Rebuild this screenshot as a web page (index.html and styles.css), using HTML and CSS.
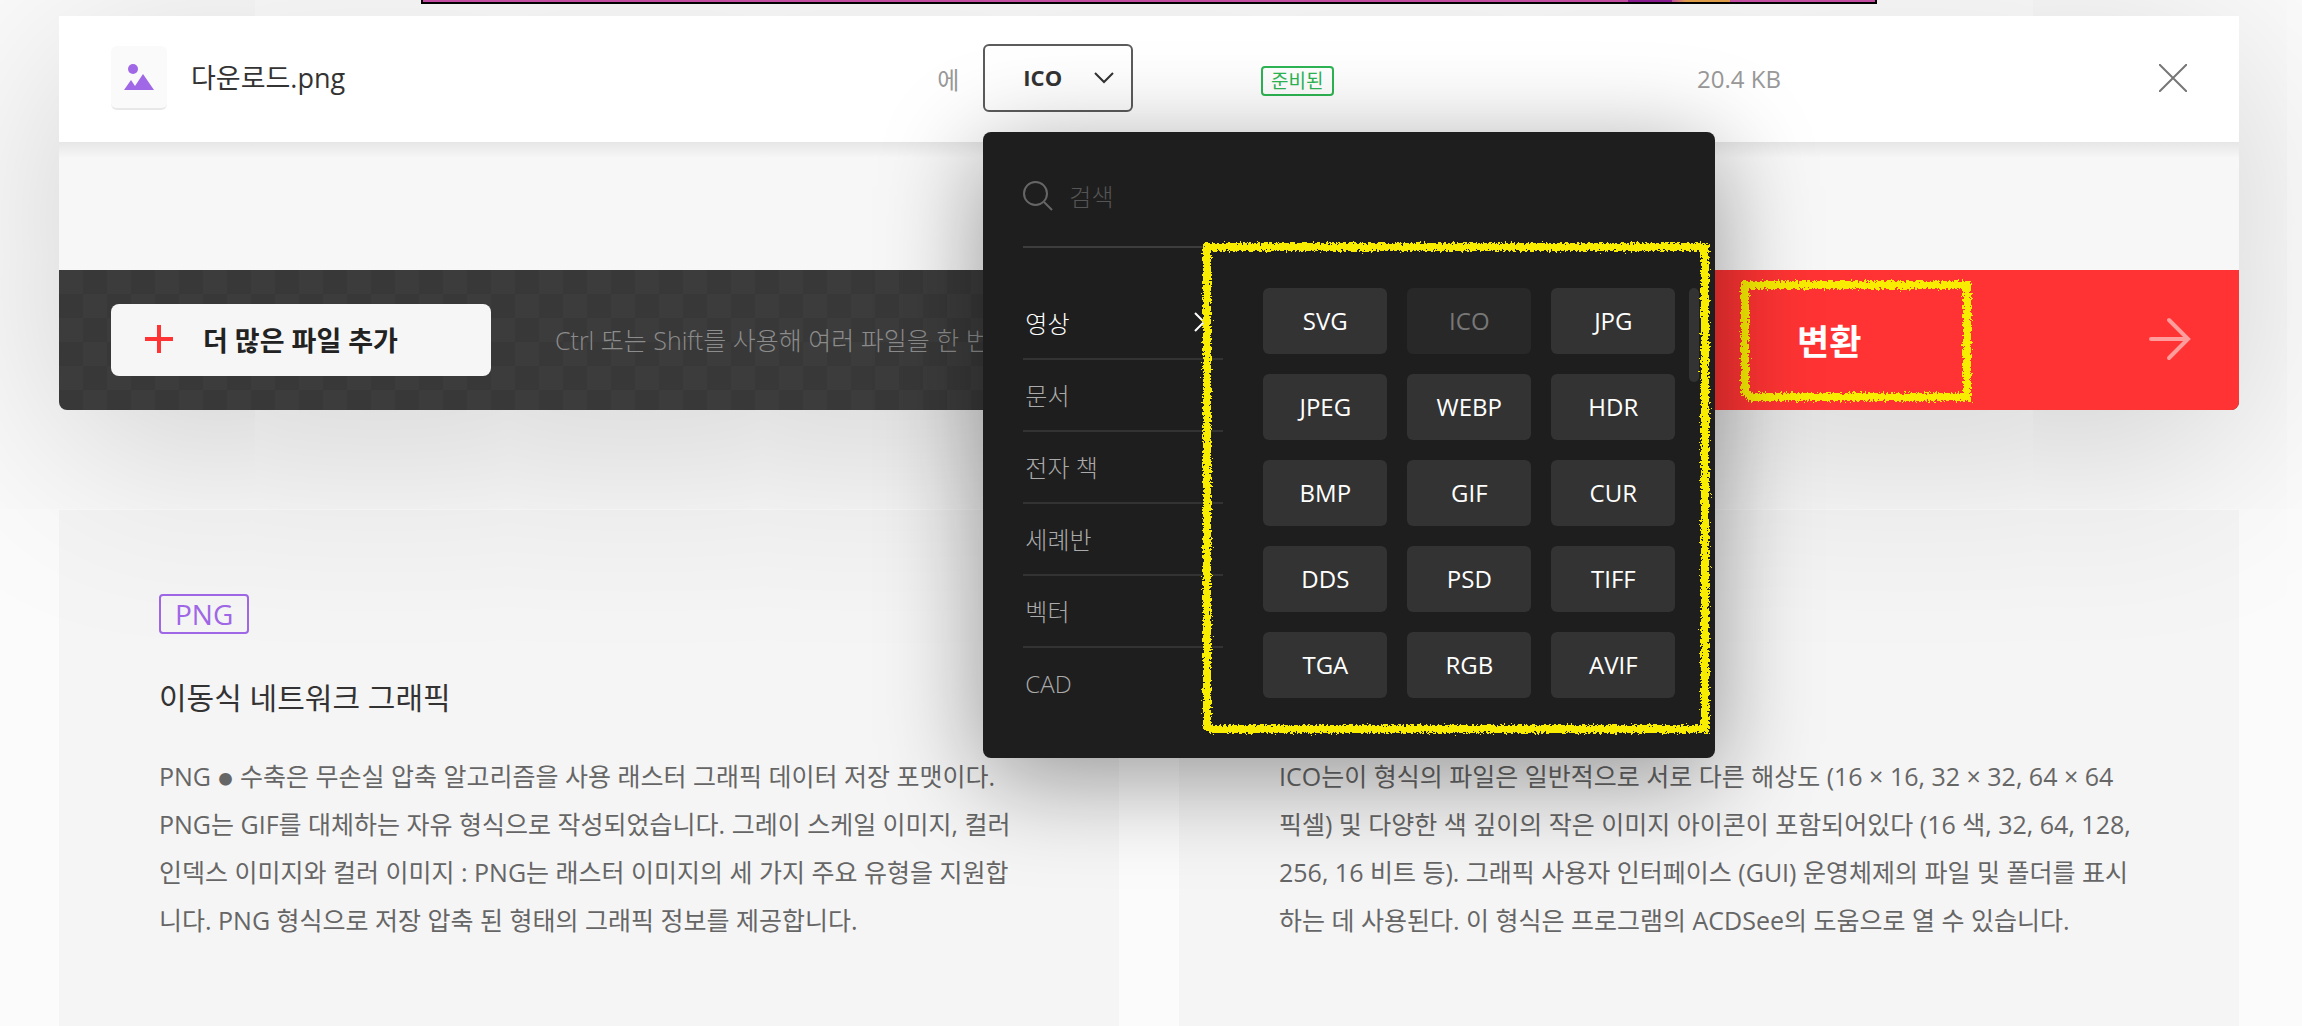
FILE: index.html
```html
<!DOCTYPE html>
<html lang="ko">
<head>
    <meta charset="UTF-8">
    <meta name="viewport" content="width=device-width, initial-scale=1.0">
    <link rel="stylesheet" href="styles.css">
    <title>PNG ICO 변환</title>
</head>
<body>
    <div class="page">
        <div class="banner"></div>
        <main class="converter">
            <div class="file_row">
                <div class="file_name">
                    <span class="file_icon">
                        <svg width="30" height="26" viewBox="0 0 30 26">
                            <circle cx="9" cy="5" r="5"/>
                            <path d="M0 26 7 16l4 6 8-12 11 16z"/>
                        </svg>
                    </span>
                    <span class="file_title">다운로드.png</span>
                </div>
                <div class="file_target">
                    <label for="target">에</label>
                    <div class="target_box">
                        <select id="target" class="target_select">
                            <option>ICO</option>
                        </select>
                        <svg class="target_arrow" width="20" height="12" viewBox="0 0 20 12"><path d="M1 1l9 9 9-9"/></svg>
                        <div class="menu">
                            <div class="menu_search">
                                <svg width="30" height="30" viewBox="0 0 30 30"><circle cx="12.500" cy="12.500" r="11.500"/><path d="M21 21l8 8"/></svg>
                                <input type="text" placeholder="검색" aria-label="검색">
                            </div>
                            <div class="menu_body">
                                <div class="groups">
                                    <button class="group active">영상
                                        <svg width="12" height="20" viewBox="0 0 12 20"><path d="M1 1l9 9-9 9"/></svg>
                                    </button>
                                    <button class="group">문서</button>
                                    <button class="group">전자 책</button>
                                    <button class="group">세례반</button>
                                    <button class="group">벡터</button>
                                    <button class="group">CAD</button>
                                </div>
                                <div class="formats">
                                    <button class="format">SVG</button>
                                    <button class="format" disabled>ICO</button>
                                    <button class="format">JPG</button>
                                    <button class="format">JPEG</button>
                                    <button class="format">WEBP</button>
                                    <button class="format">HDR</button>
                                    <button class="format">BMP</button>
                                    <button class="format">GIF</button>
                                    <button class="format">CUR</button>
                                    <button class="format">DDS</button>
                                    <button class="format">PSD</button>
                                    <button class="format">TIFF</button>
                                    <button class="format">TGA</button>
                                    <button class="format">RGB</button>
                                    <button class="format">AVIF</button>
                                </div>
                                <span class="scroll_thumb"></span>
                            </div>
                            <svg class="marker marker_formats" width="508" height="492" viewBox="0 0 508 492">
                                <defs>
                                    <filter id="chalk" x="-5%" y="-5%" width="110%" height="110%">
                                        <feTurbulence type="fractalNoise" baseFrequency="0.45" numOctaves="2" seed="4" result="noise"/>
                                        <feDisplacementMap in="SourceGraphic" in2="noise" scale="8"/>
                                    </filter>
                                </defs>
                                <path d="M5 488V5h498v482H7" filter="url(#chalk)"/>
                            </svg>
                        </div>
                    </div>
                </div>
                <div><span class="status">준비된</span></div>
                <span class="size">20.4 KB</span>
                <button class="remove" aria-label="삭제">
                    <svg width="28" height="28" viewBox="0 0 28 28"><path d="M0 0l28 28M28 0L0 28"/></svg>
                </button>
            </div>
            <div class="actions">
                <button class="add_files">
                    <svg width="28" height="28" viewBox="0 0 28 28"><path d="M14 0v28M0 14h28"/></svg>
                    더 많은 파일 추가
                </button>
                <p class="hint">Ctrl 또는 Shift를 사용해 여러 파일을 한 번</p>
                <button class="convert">
                    <span>변환</span>
                    <svg class="convert_arrow" width="42" height="44" viewBox="0 0 42 44"><path d="M2 22h37M20 3l19 19-19 19"/></svg>
                    <svg class="marker marker_convert" width="232" height="122" viewBox="0 0 232 122"><path d="M5 117V5h222v112H7" filter="url(#chalk)"/></svg>
                </button>
            </div>
        </main>
        <section class="cards">
            <article class="card">
                <span class="badge">PNG</span>
                <h2>이동식 네트워크 그래픽</h2>
                <p>PNG <span class="dot">●</span> 수축은 무손실 압축 알고리즘을 사용 래스터 그래픽 데이터 저장 포맷이다. PNG는 GIF를 대체하는 자유 형식으로 작성되었습니다. 그레이 스케일 이미지, 컬러 인덱스 이미지와 컬러 이미지 : PNG는 래스터 이미지의 세 가지 주요 유형을 지원합니다. PNG 형식으로 저장 압축 된 형태의 그래픽 정보를 제공합니다.</p>
            </article>
            <article class="card">
                <p>ICO는이 형식의 파일은 일반적으로 서로 다른 해상도 (16 × 16, 32 × 32, 64 × 64 픽셀) 및 다양한 색 깊이의 작은 이미지 아이콘이 포함되어있다 (16 색, 32, 64, 128, 256, 16 비트 등). 그래픽 사용자 인터페이스 (GUI) 운영체제의 파일 및 폴더를 표시하는 데 사용된다. 이 형식은 프로그램의 ACDSee의 도움으로 열 수 있습니다.</p>
            </article>
        </section>
    </div>
</body>
</html>
```

FILE: styles.css
```css
*{
    margin: 0;
    padding: 0;
    box-sizing: border-box;
}
body{
    background-color: #fbfbfb;
    color: #333;
    font-family: 'Open Sans', 'Noto Sans CJK KR', sans-serif;
    font-size: 26px;
}
button, input, select{
    font: inherit;
    color: inherit;
    border: 0;
    outline: 0;
    background: none;
}
button{
    cursor: pointer;
}
svg{
    fill: none;
    flex-shrink: 0;
}
.page{
    min-height: 100vh;
    padding: 0 63px 0 59px;
    display: flex;
    flex-direction: column;
    overflow: hidden;
}
.banner{
    width: 1456px;
    max-width: 100%;
    height: 4px;
    margin: 0 auto 12px;
    border: 2px solid #000;
    border-top: 0;
    background: linear-gradient(to right, #cb52a8 83%, #8e1d96 83%, #8e1d96 86%, #cb52a8 86%, #e9a44c 87%, #e9a44c 90%, #cb52a8 90%);
}
.converter{
    position: relative;
    z-index: 1;
    border-radius: 0 0 8px 8px;
    background: #f7f7f7 linear-gradient(#e6e6e6, #f7f7f7) 0 126px / 100% 16px no-repeat;
    box-shadow: 0 40px 200px rgba(0, 0, 0, 0.18);
}
.file_row{
    height: 126px;
    padding: 0 52px 2px;
    display: grid;
    grid-template-columns: 39.8% 15.6% 21% 1fr 28px;
    align-items: center;
    background-color: #fff;
    position: relative;
    z-index: 2;
}
.file_name{
    display: flex;
    align-items: center;
    gap: 24px;
    font-size: 27px;
}
.file_icon{
    width: 56px;
    height: 64px;
    display: flex;
    align-items: center;
    justify-content: center;
    border-radius: 6px;
    border-bottom: 2px solid #e8e8e8;
    background-color: #fafafa;
}
.file_icon svg{
    fill: #a067e6;
}
.file_title{
    padding-bottom: 4px;
}
.file_target{
    display: flex;
    align-items: center;
    gap: 24px;
    color: #999;
    font-size: 24px;
}
.target_box{
    position: relative;
}
.target_select{
    display: block;
    width: 150px;
    height: 68px;
    padding: 0 0 2px 38px;
    appearance: none;
    border: 2px solid #5c5c5c;
    border-radius: 6px;
    font-size: 22px;
    font-weight: 700;
    color: #333;
}
.target_arrow{
    position: absolute;
    right: 19px;
    top: 28px;
    stroke: #333;
    stroke-width: 2;
    pointer-events: none;
}
/* format menu */
.menu{
    position: absolute;
    left: 0;
    top: 88px;
    width: 732px;
    padding: 40px 40px 38px;
    border-radius: 8px;
    background-color: #1e1e1e;
    box-shadow: 0 20px 100px rgba(0, 0, 0, 0.4);
    color: #aaa;
}
.menu_search{
    height: 76px;
    padding-bottom: 26px;
    display: flex;
    align-items: center;
    gap: 16px;
    border-bottom: 2px solid #3d3d3d;
}
.menu_search svg{
    stroke: #666;
    stroke-width: 2;
}
.menu_search input{
    flex: 1;
    min-width: 0;
    font-weight: 300;
}
.menu_search input::placeholder{
    color: #555;
}
.menu_body{
    display: flex;
    justify-content: space-between;
    padding-top: 40px;
    position: relative;
}
.groups{
    width: 200px;
}
.group{
    width: 100%;
    height: 72px;
    padding: 0 17px 2px 2px;
    display: flex;
    align-items: center;
    justify-content: space-between;
    border-bottom: 2px solid #333;
    font-weight: 300;
}
.group:last-child{
    border-bottom: 0;
}
.group.active{
    color: #fff;
}
.group svg{
    stroke: #fff;
    stroke-width: 2;
}
.formats{
    display: grid;
    grid-template-columns: repeat(3, 124px);
    grid-auto-rows: 66px;
    gap: 20px;
}
.format{
    padding-bottom: 2px;
    border-radius: 6px;
    background-color: #333;
    color: #fff;
    font-size: 24px;
    font-weight: 500;
}
.format:hover{
    background-color: #444;
}
.format:disabled{
    background-color: #282828;
    color: #777;
    font-weight: 400;
}
.scroll_thumb{
    position: absolute;
    right: -24px;
    top: 40px;
    width: 10px;
    height: 94px;
    border-radius: 5px;
    background-color: #333;
}
/* yellow chalk frames */
.marker{
    position: absolute;
    overflow: visible;
    stroke: #f8ec00;
    stroke-width: 8;
    pointer-events: none;
}
.marker_formats{
    right: 5px;
    top: 110px;
}
.status{
    display: inline-block;
    padding: 0 8px;
    border: 2px solid #2db553;
    border-radius: 4px;
    color: #2db553;
    font-size: 19px;
    line-height: 26px;
}
.size{
    color: #999;
    font-size: 24px;
}
.remove{
    height: 28px;
}
.remove svg{
    display: block;
    stroke: #777;
    stroke-width: 2;
}
.actions{
    margin-top: 128px;
    height: 140px;
    display: flex;
    align-items: center;
    padding-left: 52px;
    border-radius: 0 0 8px 8px;
    background: repeating-conic-gradient(#383838 0 25%, #3c3c3c 0 50%) 0 0 / 48px 48px;
    overflow: hidden;
}
.add_files{
    width: 380px;
    height: 72px;
    padding: 0 0 2px 34px;
    display: flex;
    align-items: center;
    gap: 30px;
    border-radius: 8px;
    background-color: #f6f6f6;
    color: #222;
    font-size: 27px;
    font-weight: 600;
}
.add_files svg{
    stroke: #f33;
    stroke-width: 4;
}
.hint{
    flex: 1;
    margin-left: 64px;
    padding-bottom: 2px;
    color: #8c8c8c;
    font-size: 25px;
    font-weight: 300;
    white-space: nowrap;
}
.convert{
    position: relative;
    width: 540px;
    height: 100%;
    padding: 0 48px 2px 98px;
    display: flex;
    align-items: center;
    justify-content: space-between;
    background-color: #f33;
    color: #fff;
    font-size: 35px;
    font-weight: 700;
}
.convert_arrow{
    stroke: #ff9c9c;
    stroke-width: 4;
    stroke-linecap: round;
}
.marker_convert{
    left: 41px;
    top: 10px;
}
.cards{
    flex: 1;
    margin-top: 100px;
    display: grid;
    grid-template-columns: 1fr 1fr;
    gap: 60px;
}
.card{
    padding: 84px 100px 82px;
    display: flex;
    flex-direction: column;
    background-color: #f5f5f5;
    color: #666;
}
.badge{
    align-self: flex-start;
    padding: 0 14px;
    border: 2px solid #a067e6;
    border-radius: 4px;
    color: #a067e6;
    font-size: 28px;
    line-height: 36px;
}
.card h2{
    margin: 40px 0 30px;
    color: #333;
    font-size: 30px;
    font-weight: 400;
    line-height: 48px;
}
.card p{
    margin-top: auto;
    font-size: 25px;
    line-height: 48px;
}
.dot{
    display: inline-block;
    margin: 0 1px;
    font-size: 14px;
    line-height: 1;
    vertical-align: 2px;
}
```
